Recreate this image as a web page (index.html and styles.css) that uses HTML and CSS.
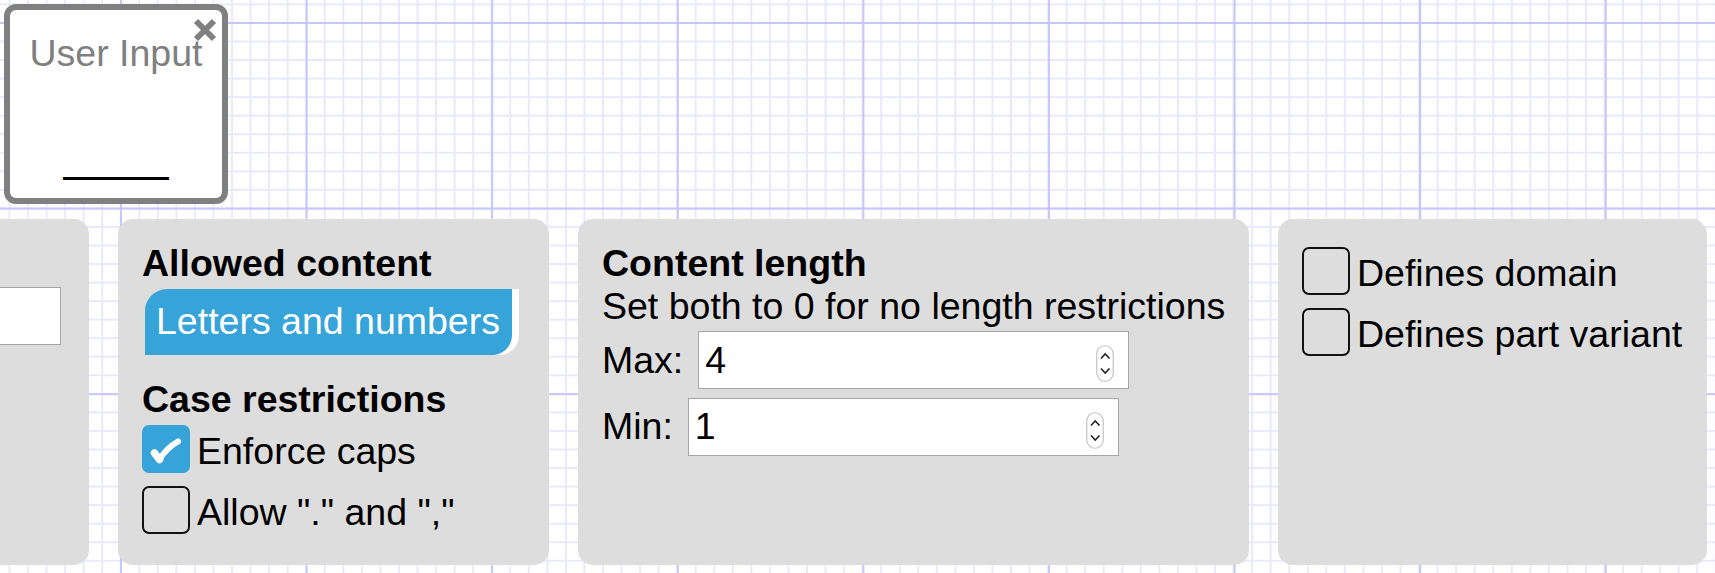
FILE: index.html
```
<!DOCTYPE html>
<html lang="en">
<head>
  <meta charset="UTF-8">
  <title>Field Editor</title>
  <link rel="stylesheet" href="styles.css">
</head>
<body>

  <!-- Canvas with the selected node -->
  <div class="canvas">
    <div class="node">
      <div class="node-title">User Input</div>
      <div class="node-blank">____</div>
      <span class="node-close">
        <svg width="24" height="24" viewBox="0 0 24 24">
          <path d="M3 3 L21 21 M21 3 L3 21" stroke="#808080" stroke-width="6" fill="none"/>
        </svg>
      </span>
    </div>
  </div>

  <!-- Field settings -->
  <div class="panels">
    <div class="panel panel-name">
      <input type="text" class="text-field">
    </div>

    <div class="panel panel-content">
      <h3>Allowed content</h3>
      <div class="pill">Letters and numbers</div>
      <h3 class="spaced">Case restrictions</h3>
      <div class="checks">
        <label class="check">
          <span class="box checked">
            <svg width="48" height="48" viewBox="0 0 48 48">
              <path d="M12.5 28 L17.5 34.5" stroke="#fff" stroke-width="7.5" stroke-linecap="round" fill="none"/>
              <path d="M17.5 34.5 C22 27 28 21 36 16.5" stroke="#fff" stroke-width="6" stroke-linecap="round" fill="none"/>
            </svg>
          </span>Enforce caps
        </label>
        <label class="check"><span class="box"></span>Allow "." and ","</label>
      </div>
    </div>

    <div class="panel panel-length">
      <h3>Content length</h3>
      <p>Set both to 0 for no length restrictions</p>
      <div class="len-row">
        <span>Max:</span>
        <div class="number">
          <input type="number" value="4">
          <svg class="spinner" width="18" height="37" viewBox="0 0 18 37">
            <rect x="0.75" y="0.75" width="16.5" height="35.5" rx="8.25" fill="#fff" stroke="#c4c4c4" stroke-width="1.2"/>
            <path d="M5 13.5 L9.25 9 L13.5 13.5 M5 23.5 L9.25 28 L13.5 23.5" stroke="#222" stroke-width="1.6" fill="none"/>
          </svg>
        </div>
      </div>
      <div class="len-row second">
        <span>Min:</span>
        <div class="number">
          <input type="number" value="1">
          <svg class="spinner" width="18" height="37" viewBox="0 0 18 37">
            <rect x="0.75" y="0.75" width="16.5" height="35.5" rx="8.25" fill="#fff" stroke="#c4c4c4" stroke-width="1.2"/>
            <path d="M5 13.5 L9.25 9 L13.5 13.5 M5 23.5 L9.25 28 L13.5 23.5" stroke="#222" stroke-width="1.6" fill="none"/>
          </svg>
        </div>
      </div>
    </div>

    <div class="panel panel-flags">
      <div class="checks">
        <label class="check"><span class="box"></span>Defines domain</label>
        <label class="check"><span class="box"></span>Defines part variant</label>
      </div>
    </div>
  </div>

</body>
</html>
```

FILE: styles.css
```
* {
  box-sizing: border-box;
}

html, body {
  height: 100%;
}

body {
  margin: 0;
  overflow: hidden;
  font-family: 'Liberation Sans', Arial, Helvetica, sans-serif;
  font-size: 37.5px;
  color: #000;
  background-color: #fff;
  /* graph paper: major lines every 10 minor cells */
  background-image:
    linear-gradient(to right, #c6c6fa 2px, transparent 2px),
    linear-gradient(to bottom, #c6c6fa 2px, transparent 2px),
    linear-gradient(to right, #e9e9fd 2px, transparent 2px),
    linear-gradient(to bottom, #e9e9fd 2px, transparent 2px);
  background-size: 185.6px 185.6px, 185.6px 185.6px, 18.56px 18.56px, 18.56px 18.56px;
  background-position: 120px 0, 0 22px, 8.5px 0, 0 3.4px;
}

/* Canvas */
.canvas {
  position: relative;
  height: 219px;
}

.node {
  position: absolute;
  left: 4px;
  top: 4px;
  width: 224px;
  height: 200px;
  padding-top: 22px;
  background: #fff;
  border: 6px solid #808080;
  border-radius: 12px;
  text-align: center;
}

.node-title {
  color: #808080;
}

.node-blank {
  margin-top: 56px;
  font-size: 47px;
  line-height: 1;
}

.node-close {
  position: absolute;
  top: 8px;
  right: 5px;
  width: 24px;
  height: 24px;
}

.node-close svg {
  display: block;
}

/* Settings panels */
.panels {
  display: flex;
  justify-content: flex-end;
  gap: 29px;
  height: 346px;
  padding-right: 8px;
}

.panel {
  flex-shrink: 0;
  background: #ddd;
  border-radius: 15px;
  padding: 23px 24px;
  white-space: nowrap;
}

.panel h3 {
  margin: 0;
  font-size: 37.5px;
  font-weight: bold;
}

.panel h3.spaced {
  margin-top: 23px;
}

.panel p {
  margin: 0;
}

.panel-name {
  width: 400px;
  padding: 68px 28px 0 24px;
}

.text-field {
  display: block;
  width: 100%;
  height: 58px;
  border: 1px solid #a6a6a6;
  background: #fff;
}

.panel-content {
  width: 431px;
}

.panel-length {
  width: 671px;
  padding-right: 20px;
}

.panel-flags {
  width: 429px;
  padding-top: 24px;
}

.pill {
  width: fit-content;
  margin: 4px 0 0 3px;
  padding: 11px 12px 12px 11px;
  background: #36a3d9;
  color: #fff;
  border-radius: 22px 0 20px 0;
  box-shadow: 7px 0 0 #fff;
}

/* Checkboxes */
.checks {
  display: flex;
  flex-direction: column;
  gap: 13px;
  margin-top: 4px;
}

.check {
  display: flex;
  align-items: flex-end;
  gap: 7px;
  height: 48px;
}

.box {
  flex-shrink: 0;
  width: 48px;
  height: 48px;
  border: 2px solid #111;
  border-radius: 7px;
}

.box.checked {
  border: none;
  background: #36a3d9;
}

.box.checked svg {
  display: block;
}

/* Length inputs */
.len-row {
  display: flex;
  align-items: baseline;
  column-gap: 15px;
  margin-top: 3px;
}

.len-row.second {
  margin-top: 8.5px;
}

.number {
  position: relative;
}

.number input {
  width: 431px;
  height: 58px;
  padding: 0 6px;
  border: 1px solid #a6a6a6;
  background: #fff;
  font-family: inherit;
  font-size: 37.5px;
  color: #000;
  -moz-appearance: textfield;
}

.number input::-webkit-inner-spin-button,
.number input::-webkit-outer-spin-button {
  -webkit-appearance: none;
  margin: 0;
}

.spinner {
  position: absolute;
  right: 15px;
  top: 14px;
}
```
